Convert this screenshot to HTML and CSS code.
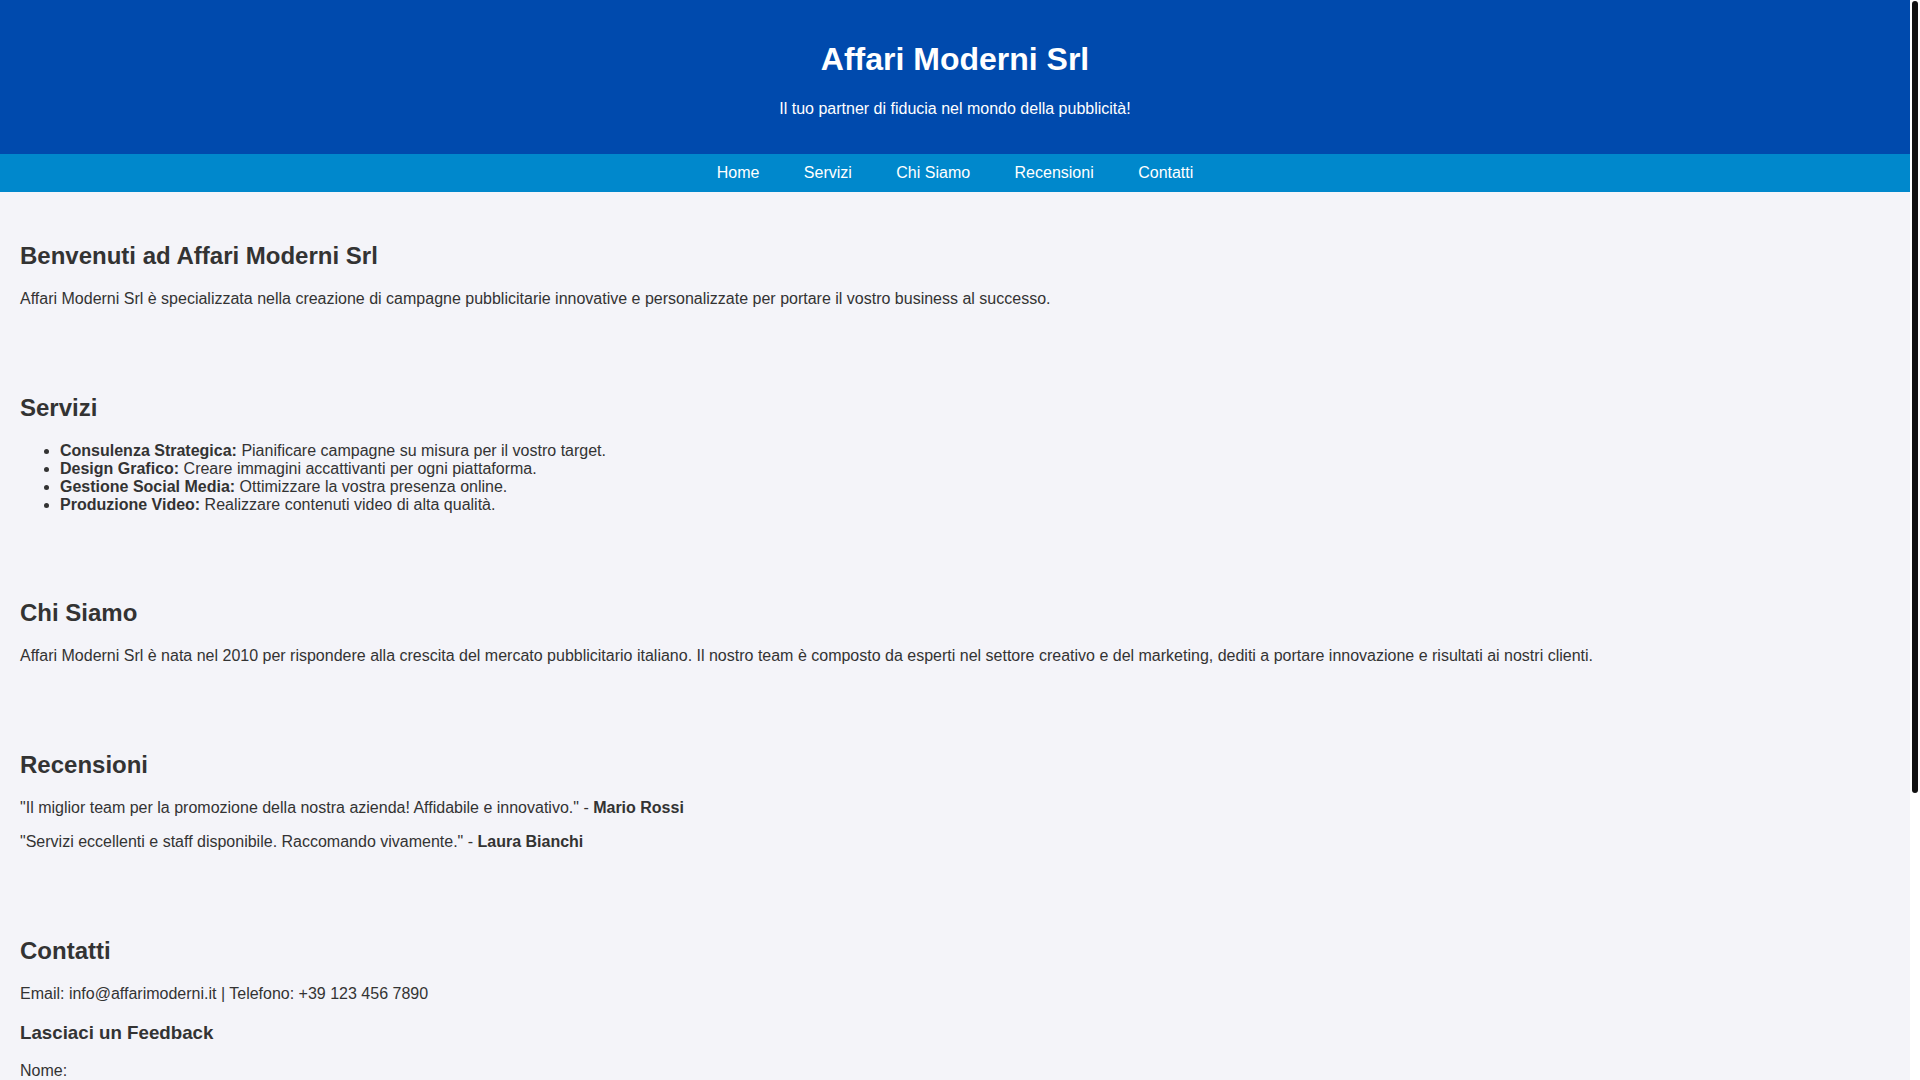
FILE: index.html
```html
<!DOCTYPE html>
<html lang="it">
<head>
<meta charset="UTF-8">
<title>Affari Moderni Srl</title>
<link rel="stylesheet" href="styles.css">
</head>
<body>
<header class="site-header">
  <h1>Affari Moderni Srl</h1>
  <p>Il tuo partner di fiducia nel mondo della pubblicità!</p>
</header>
<nav class="site-nav">
  <a href="#home">Home</a>
  <a href="#servizi">Servizi</a>
  <a href="#chi-siamo">Chi Siamo</a>
  <a href="#recensioni">Recensioni</a>
  <a href="#contatti">Contatti</a>
</nav>
<main>
  <section class="section" id="home">
    <h2>Benvenuti ad Affari Moderni Srl</h2>
    <p>Affari Moderni Srl è specializzata nella creazione di campagne pubblicitarie innovative e personalizzate per portare il vostro business al successo.</p>
  </section>
  <section class="section" id="servizi">
    <h2>Servizi</h2>
    <ul>
      <li><strong>Consulenza Strategica:</strong> Pianificare campagne su misura per il vostro target.</li>
      <li><strong>Design Grafico:</strong> Creare immagini accattivanti per ogni piattaforma.</li>
      <li><strong>Gestione Social Media:</strong> Ottimizzare la vostra presenza online.</li>
      <li><strong>Produzione Video:</strong> Realizzare contenuti video di alta qualità.</li>
    </ul>
  </section>
  <section class="section" id="chi-siamo">
    <h2>Chi Siamo</h2>
    <p>Affari Moderni Srl è nata nel 2010 per rispondere alla crescita del mercato pubblicitario italiano. Il nostro team è composto da esperti nel settore creativo e del marketing, dediti a portare innovazione e risultati ai nostri clienti.</p>
  </section>
  <section class="section" id="recensioni">
    <h2>Recensioni</h2>
    <p>"Il miglior team per la promozione della nostra azienda! Affidabile e innovativo." - <strong>Mario Rossi</strong></p>
    <p>"Servizi eccellenti e staff disponibile. Raccomando vivamente." - <strong>Laura Bianchi</strong></p>
  </section>
  <section class="section" id="contatti">
    <h2>Contatti</h2>
    <p>Email: info@affarimoderni.it | Telefono: +39 123 456 7890</p>
    <h3>Lasciaci un Feedback</h3>
    <form class="feedback">
      <label for="nome">Nome:</label>
      <input type="text" id="nome" name="nome">
      <label for="email">Email:</label>
      <input type="email" id="email" name="email">
      <label for="messaggio">Messaggio:</label>
      <textarea id="messaggio" name="messaggio"></textarea>
      <button type="submit">Invia</button>
    </form>
  </section>
</main>
<footer class="site-footer">
  <p>&copy; 2024 Affari Moderni Srl. Tutti i diritti riservati.</p>
</footer>
<div class="scrollbar" aria-hidden="true"><div class="scrollbar-thumb"></div></div>
</body>
</html>
```
FILE: styles.css
```css
html, body {
  margin: 0;
  padding: 0;
}
body {
  font-family: "Liberation Sans", Arial, sans-serif;
  font-size: 16px;
  color: #333;
  background: #f4f4f9;
  margin-right: 10px;
}
.scrollbar {
  position: fixed;
  top: 0;
  right: 0;
  width: 10px;
  height: 100vh;
  background: #fff;
}
.scrollbar-thumb {
  margin: 1px 2px 0;
  height: 792px;
  background: #111;
  border-radius: 3px;
}
.site-header {
  background: #004aad;
  color: #fff;
  text-align: center;
  padding: 20px;
}
.site-nav {
  background: #0088cc;
  text-align: center;
  padding: 10px 0;
}
.site-nav a {
  color: #fff;
  text-decoration: none;
  margin: 0 20px;
}
.section {
  margin: 10px 0;
  padding: 20px;
}
.feedback label {
  display: block;
}
.feedback input,
.feedback textarea {
  display: block;
  box-sizing: border-box;
  width: 100%;
  padding: 8px;
  margin: 8px 0 16px;
  height: 38px;
  font-family: "Liberation Sans", Arial, sans-serif;
  font-size: 16px;
  border: 1px solid #ccc;
  background: #fff;
}
.feedback textarea {
  height: 100px;
}
.feedback button {
  background: #004aad;
  color: #fff;
  border: none;
  padding: 10px 20px;
  font-size: 16px;
  font-family: "Liberation Sans", Arial, sans-serif;
}
.site-footer {
  background: #004aad;
  color: #fff;
  text-align: center;
  padding: 10px;
}
.site-footer p {
  margin: 0;
}
```
